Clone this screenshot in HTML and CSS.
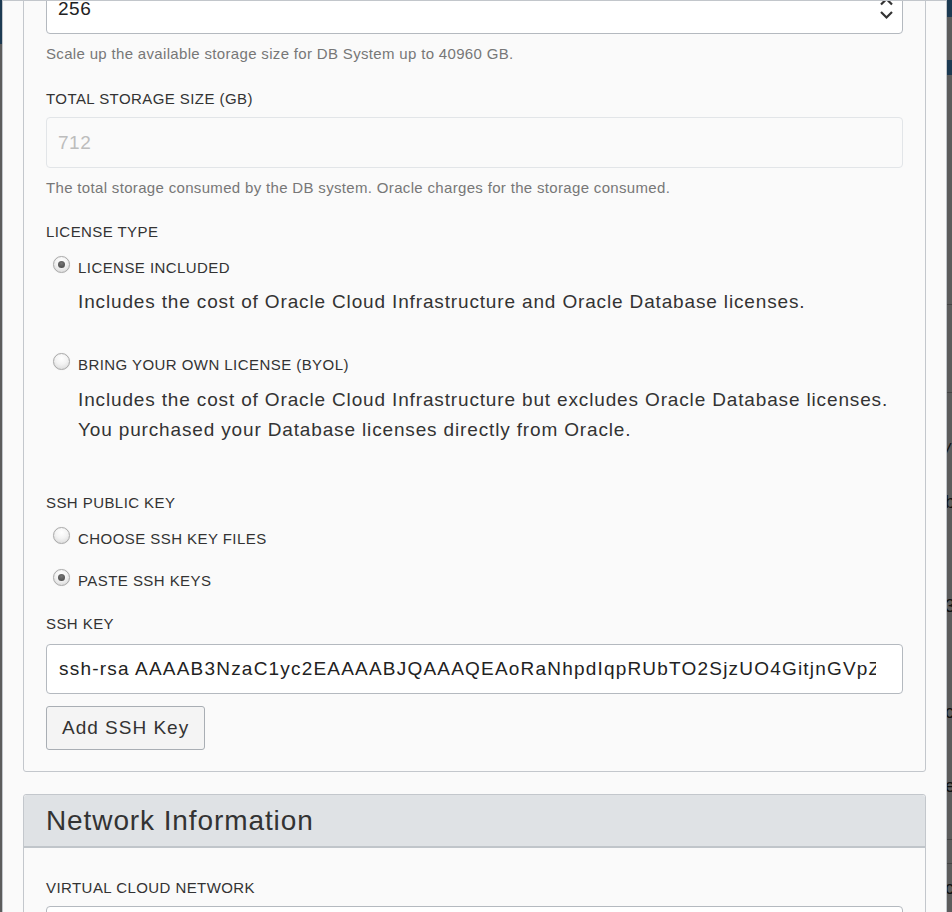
FILE: index.html
```html
<!DOCTYPE html>
<html>
<head>
<meta charset="utf-8">
<link rel="stylesheet" href="styles.css">
</head>
<body>
<div class="strip strip-left">
  <div class="navy navy-l"></div>
</div>
<div class="modal">
  <div class="card card-first">
    <div class="input input-number">
      <span class="input-text">256</span>
      <svg class="spin" width="13" height="26" viewBox="0 0 13 26">
        <path d="M1 7.5 L6.5 2 L12 7.5" fill="none" stroke="#333" stroke-width="2.2"/>
        <path d="M1 15 L6.5 20.5 L12 15" fill="none" stroke="#333" stroke-width="2.2"/>
      </svg>
    </div>
    <p class="help help-1">Scale up the available storage size for DB System up to 40960 GB.</p>

    <div class="label label-total">TOTAL STORAGE SIZE (GB)</div>
    <div class="input input-disabled"><span class="input-text">712</span></div>
    <p class="help help-2">The total storage consumed by the DB system. Oracle charges for the storage consumed.</p>

    <div class="label label-license">LICENSE TYPE</div>
    <div class="radio-row row-lic1"><span class="radio checked"></span><span class="radio-label">LICENSE INCLUDED</span></div>
    <p class="desc desc-1">Includes the cost of Oracle Cloud Infrastructure and Oracle Database licenses.</p>
    <div class="radio-row row-lic2"><span class="radio"></span><span class="radio-label">BRING YOUR OWN LICENSE (BYOL)</span></div>
    <p class="desc desc-2">Includes the cost of Oracle Cloud Infrastructure but excludes Oracle Database licenses.<br>You purchased your Database licenses directly from Oracle.</p>

    <div class="label label-ssh">SSH PUBLIC KEY</div>
    <div class="radio-row row-ssh1"><span class="radio"></span><span class="radio-label">CHOOSE SSH KEY FILES</span></div>
    <div class="radio-row row-ssh2"><span class="radio checked"></span><span class="radio-label">PASTE SSH KEYS</span></div>

    <div class="label label-key">SSH KEY</div>
    <div class="input input-key"><span class="clip">ssh-rsa AAAAB3NzaC1yc2EAAAABJQAAAQEAoRaNhpdIqpRUbTO2SjzUO4GitjnGVpZnWq8kLx1</span></div>
    <button class="btn" type="button">Add SSH Key</button>
  </div>

  <div class="card card-network">
    <div class="card-header">Network Information</div>
    <div class="card-body">
      <div class="label label-vcn">VIRTUAL CLOUD NETWORK</div>
      <div class="input input-vcn"></div>
    </div>
  </div>
</div>
<div class="strip strip-right">
  <div class="navy navy-r1"></div>
  <div class="gap-r1"></div>
  <div class="navy navy-r2"></div>
  <div class="line-r l1"></div>
  <div class="line-r l2"></div>
  <div class="frag f1">/</div>
  <div class="frag f2">b</div>
  <div class="frag f3">3</div>
  <div class="frag f4">c</div>
  <div class="frag f5">e</div>
  <div class="line-r l3"></div>
  <div class="line-r l4"></div>
  <div class="frag f6">c</div>
</div>
</body>
</html>
```

FILE: styles.css
```css
html, body {
  margin: 0;
  padding: 0;
}
body {
  width: 952px;
  height: 912px;
  overflow: hidden;
  display: flex;
  background: #5c5c5c;
  font-family: "Liberation Sans", Arial, sans-serif;
  color: #333;
}
.strip {
  background: #5c5c5c;
  display: flex;
  flex-direction: column;
  overflow: hidden;
}
.strip-left {
  width: 2px;
  flex: none;
}
.strip-right {
  flex: 1;
  font-size: 18px;
  line-height: 18px;
  color: #111;
}
.navy {
  background: #1c3a52;
  flex: none;
}
.navy-l { height: 44px; }
.navy-r1 { height: 17px; }
.gap-r1 { height: 43px; flex: none; }
.navy-r2 { height: 15px; }
.line-r {
  flex: none;
  height: 1px;
  background: #444;
}
.l1 { margin-top: 229px; }
.l2 { margin-top: 87px; }
.l3 { margin-top: 44px; }
.l4 { margin-top: 23px; }
.frag { flex: none; margin-left: -2px; }
.f1 { margin-top: 48px; font-style: italic; }
.f2 { margin-top: 34px; }
.f3 { margin-top: 86px; }
.f4 { margin-top: 88px; }
.f5 { margin-top: 56px; }
.f6 { margin-top: 15px; }

.modal {
  flex: none;
  height: 912px;
  box-sizing: border-box;
  width: 945px;
  background: #fafafa;
  border: 1px solid #c2c6cb;
  border-bottom: none;
  padding: 0 20px;
  overflow: hidden;
}
.card {
  border: 1px solid #c3c7cc;
  border-radius: 3px;
  background: #fafafa;
}
.card-first {
  margin-top: -40px;
  padding: 22px 22px 21px 22px;
}
.input {
  box-sizing: border-box;
  height: 50px;
  border: 1px solid #b4b9bf;
  border-radius: 4px;
  background: #fff;
  display: flex;
  align-items: center;
  padding: 0 11px;
  font-size: 19px;
  letter-spacing: 0.5px;
  color: #222;
}
.input-number {
  justify-content: space-between;
  padding-right: 9px;
}
.spin { display: block; margin-top: 2px; }
.input-disabled {
  margin-top: 8px;
  height: 51px;
  background: #fafafa;
  border-color: #e2e5e8;
  color: #bdbdbd;
}
.help {
  margin: 0;
  font-size: 15px;
  letter-spacing: 0.33px;
  line-height: 20px;
  color: #777;
}
.help-1 { margin-top: 10px; }
.help-2 { margin-top: 10px; }
.label {
  font-size: 15px;
  letter-spacing: 0.43px;
  line-height: 20px;
  color: #333;
}
.label-total { margin-top: 25px; }
.label-license { margin-top: 24px; }
.label-ssh { margin-top: 48px; }
.label-key { margin-top: 23px; }
.radio-row {
  display: flex;
  align-items: center;
  height: 20px;
  font-size: 15px;
  letter-spacing: 0.44px;
  line-height: 20px;
  color: #333;
}
.radio {
  box-sizing: border-box;
  width: 17px;
  height: 17px;
  margin-left: 7px;
  margin-right: 8px;
  margin-top: -7px;
  border-radius: 50%;
  border: 1px solid #a9a9a9;
  background: radial-gradient(circle at 50% 30%, #ffffff 0%, #f3f3f3 45%, #d4d4d4 100%);
  box-shadow: 0 0 1px rgba(0,0,0,0.15);
  display: flex;
  align-items: center;
  justify-content: center;
  flex: none;
}
.radio.checked::after {
  content: "";
  width: 7px;
  height: 7px;
  border-radius: 50%;
  background: radial-gradient(circle at 50% 35%, #777 0%, #444 100%);
}
.row-lic1 { margin-top: 16px; }
.row-lic2 { margin-top: 38px; }
.row-ssh1 { margin-top: 16px; }
.row-ssh2 { margin-top: 22px; }
.desc {
  margin: 9px 0 0 32px;
  font-size: 19px;
  letter-spacing: 0.85px;
  line-height: 30px;
  color: #333;
  white-space: nowrap;
}
.desc-2 { margin-top: 10px; }
.input-key {
  margin-top: 10px;
  padding: 0 26px 0 12px;
}
.clip {
  display: block;
  width: 100%;
  overflow: hidden;
  white-space: nowrap;
  letter-spacing: 1.2px;
}
.btn {
  display: block;
  margin-top: 12px;
  height: 44px;
  padding: 0 15px;
  font-family: "Liberation Sans", Arial, sans-serif;
  font-size: 19px;
  letter-spacing: 1px;
  color: #333;
  background: #f4f4f4;
  border: 1px solid #a9aeb4;
  border-radius: 3px;
}
.card-network {
  margin-top: 22px;
}
.card-header {
  height: 53px;
  box-sizing: border-box;
  background: #dfe2e5;
  border-bottom: 2px solid #c0c5ca;
  font-size: 28px;
  letter-spacing: 0.9px;
  line-height: 51px;
  padding: 0 22px;
  color: #333;
  border-radius: 3px 3px 0 0;
}
.card-body {
  padding: 30px 22px 20px;
}
.input-vcn {
  margin-top: 8px;
}
```
